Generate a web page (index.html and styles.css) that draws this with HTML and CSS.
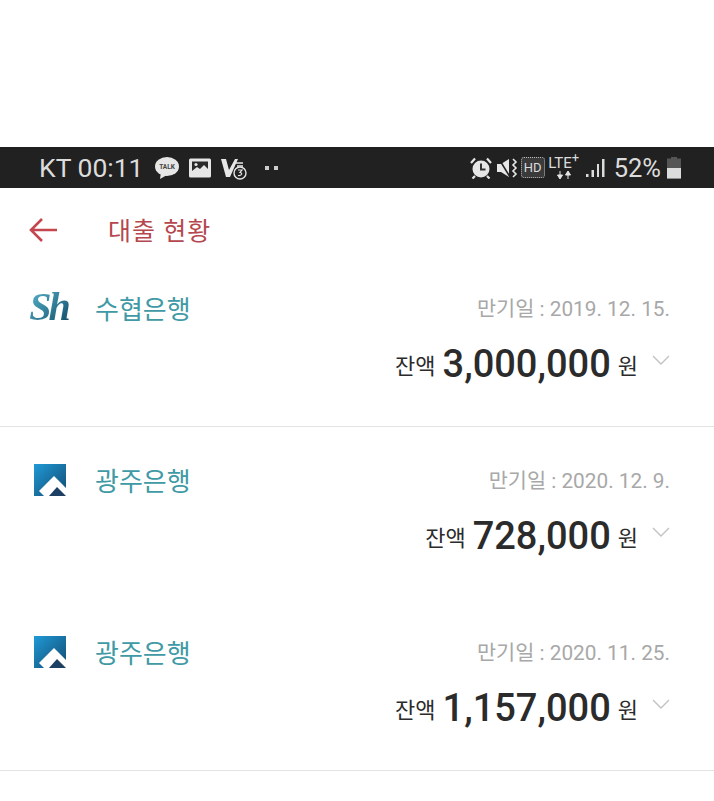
FILE: index.html
```html
<!DOCTYPE html>
<html lang="ko">

<head>
  <meta charset="UTF-8" />
  <meta name="viewport" content="width=device-width, initial-scale=1.0" />
  <title>대출 현황</title>
  <link rel="stylesheet" href="styles.css">
</head>

<body>
  <div class="top-blank"></div>

  <div class="status-bar">
    <div class="status-left">
      <span class="carrier">KT 00:11</span>
      <svg class="ico" width="24" height="24" viewBox="0 0 24 24">
        <ellipse cx="12" cy="10.500" rx="12" ry="9.500" fill="#e6e6e6" />
        <path d="M6 16l-1 7 7-4z" fill="#e6e6e6" />
        <text x="12" y="13" font-size="6.500" font-weight="700" font-family="Roboto, sans-serif" text-anchor="middle" fill="#444">TALK</text>
      </svg>
      <svg class="ico" width="22" height="20" viewBox="0 0 22 20">
        <rect y="0.500" width="22" height="19" rx="1.500" fill="#e6e6e6" />
        <rect x="3" y="3.500" width="16" height="9.500" fill="#2a2a2a" />
        <circle cx="7" cy="6.500" r="1.600" fill="#e6e6e6" />
        <path d="M3 13l5-4 3 2 4-4 4 4v5H3z" fill="#e6e6e6" />
      </svg>
      <svg class="ico" width="26" height="24" viewBox="0 0 26 24">
        <path d="M0 3h5l3 11L14 3h3L9 21H5z" fill="#e6e6e6" />
        <path d="M14 7h8M16 10h6" stroke="#e6e6e6" stroke-width="1.600" />
        <circle cx="19" cy="17" r="6" fill="#222" stroke="#e6e6e6" stroke-width="1.400" />
        <path d="M17 14h4l-2 2.500c2.500 0 2.500 3.500-2 3" fill="none" stroke="#e6e6e6" stroke-width="1.200" />
      </svg>
      <span class="dots"><i></i><i></i></span>
    </div>
    <div class="status-right">
      <svg class="ico" width="22" height="22" viewBox="0 0 22 22">
        <circle cx="11" cy="12" r="8.500" fill="#e6e6e6" />
        <path d="M11 6.500v6h4.500" fill="none" stroke="#333" stroke-width="2" />
        <path d="M1 6l4-4.500M21 6l-4-4.500M5 19l-2.500 2.500M17 19l2.500 2.500" stroke="#e6e6e6" stroke-width="2.200" />
      </svg>
      <svg class="ico mute" width="22" height="22" viewBox="0 0 22 22">
        <path d="M1 7h4l8-5v18l-8-5H1z" fill="#e6e6e6" />
        <path d="M3 2l11 18" stroke="#212121" stroke-width="1.500" />
        <path d="M17 2l3 3-3 3 3 3-3 3 3 3-3 3" fill="none" stroke="#e6e6e6" stroke-width="1.600" />
      </svg>
      <span class="hd">HD</span>
      <span class="lte">
        <span class="lte-text">LTE<sup>+</sup></span>
        <svg class="ico" width="16" height="8" viewBox="0 0 16 8">
          <path d="M4 0v5M1.500 4L4 8l2.500-4zM12 8V3M9.500 4L12 0l2.500 4z" fill="#e6e6e6" stroke="#e6e6e6" />
        </svg>
      </span>
      <svg class="ico signal" width="19" height="20" viewBox="0 0 19 20">
        <path d="M0 16h2.500v3H0zM5.500 12H8v7H5.500zM11 6h2v13h-2zM16 1h2.500v18H16z" fill="#dcdcdc" />
      </svg>
      <span class="battery-pct">52%</span>
      <span class="battery"><i></i></span>
    </div>
  </div>

  <div class="app-header">
    <svg class="back" width="30" height="26" viewBox="0 0 30 26">
      <path d="M29 13H3M14 2L3 13l11 11" fill="none" stroke="#c4474f" stroke-width="2.600" />
    </svg>
    <span class="title">대출 현황</span>
  </div>

  <ul class="loan-list">
    <li class="loan-item line">
      <div class="loan-top">
        <span class="bank-logo"><span class="sh">Sh</span></span>
        <span class="bank-name">수협은행</span>
        <span class="due">만기일 : 2019. 12. 15.</span>
      </div>
      <div class="loan-bottom">
        <span class="unit">잔액</span>
        <span class="amount">3,000,000</span>
        <span class="unit">원</span>
        <svg class="chev" width="18" height="10" viewBox="0 0 18 10">
          <path d="M1 1l8 8 8-8" fill="none" stroke="#c2c2c2" stroke-width="1.400" />
        </svg>
      </div>
    </li>
    <li class="loan-item">
      <div class="loan-top">
        <span class="bank-logo">
          <svg width="32" height="32" viewBox="0 0 32 32">
            <defs>
              <linearGradient id="kj1" x1="0" y1="0" x2="1" y2="1">
                <stop offset="0" stop-color="#1f9ad6" />
                <stop offset="1" stop-color="#134a72" />
              </linearGradient>
            </defs>
            <rect width="32" height="32" fill="url(#kj1)" />
            <path d="M5 27L20 12l12 12v8h-17l-5 0z" fill="#fff" />
            <path d="M15 32l8-9 9 9z" fill="#1d3f63" />
          </svg>
        </span>
        <span class="bank-name">광주은행</span>
        <span class="due">만기일 : 2020. 12. 9.</span>
      </div>
      <div class="loan-bottom">
        <span class="unit">잔액</span>
        <span class="amount">728,000</span>
        <span class="unit">원</span>
        <svg class="chev" width="18" height="10" viewBox="0 0 18 10">
          <path d="M1 1l8 8 8-8" fill="none" stroke="#c2c2c2" stroke-width="1.400" />
        </svg>
      </div>
    </li>
    <li class="loan-item line">
      <div class="loan-top">
        <span class="bank-logo">
          <svg width="32" height="32" viewBox="0 0 32 32">
            <rect width="32" height="32" fill="url(#kj1)" />
            <path d="M5 27L20 12l12 12v8h-17l-5 0z" fill="#fff" />
            <path d="M15 32l8-9 9 9z" fill="#1d3f63" />
          </svg>
        </span>
        <span class="bank-name">광주은행</span>
        <span class="due">만기일 : 2020. 11. 25.</span>
      </div>
      <div class="loan-bottom">
        <span class="unit">잔액</span>
        <span class="amount">1,157,000</span>
        <span class="unit">원</span>
        <svg class="chev" width="18" height="10" viewBox="0 0 18 10">
          <path d="M1 1l8 8 8-8" fill="none" stroke="#c2c2c2" stroke-width="1.400" />
        </svg>
      </div>
    </li>
  </ul>
</body>

</html>
```

FILE: styles.css
```css
* {
  padding: 0;
  margin: 0;
  list-style: none;
  box-sizing: border-box;
}

body {
  background-color: #fff;
  font-family: Roboto, "Noto Sans CJK KR", sans-serif;
  overflow: hidden;
}

.top-blank {
  height: 147px;
}

.status-bar {
  display: flex;
  justify-content: space-between;
  align-items: center;
  height: 41px;
  padding: 0 33px 0 39px;
  color: #dcdcdc;
  background-color: #212121;
}

.status-left,
.status-right {
  display: flex;
  align-items: center;
}

.status-left {
  gap: 10px;
}

.status-right {
  gap: 3px;
}

.ico {
  display: block;
}

.carrier {
  margin-right: 1px;
  font-size: 26.500px;
}

.dots {
  display: flex;
  gap: 5px;
  margin-left: 8px;
}

.dots>i {
  width: 4px;
  height: 4px;
  background-color: #ccc;
}

.mute {
  margin-left: 1px;
}

.hd {
  width: 24px;
  font-size: 13px;
  line-height: 19px;
  text-align: center;
  background-color: #3a3a3a;
  border: 1px dotted #bbb;
  border-radius: 3px;
}

.lte {
  display: flex;
  flex-direction: column;
  align-items: center;
  width: 32px;
}

.lte-text {
  font-size: 15px;
  line-height: 15px;
  white-space: nowrap;
}

.lte-text>sup {
  font-size: 13px;
  line-height: 0;
}

.signal {
  margin-left: 3px;
}

.battery-pct {
  margin-left: 6px;
  font-size: 25.500px;
}

.battery {
  display: flex;
  align-items: flex-end;
  width: 14px;
  height: 22px;
  margin-left: 3px;
  background-color: #555;
  clip-path: polygon(0 2px, 4px 2px, 4px 0, 10px 0, 10px 2px, 100% 2px, 100% 100%, 0 100%);
}

.battery>i {
  width: 100%;
  height: 11px;
  background-color: #dcdcdc;
}

.app-header {
  display: flex;
  align-items: center;
  height: 67px;
  padding: 14px 0 0 28px;
}

.back {
  display: block;
  margin: 2px 50px 0 0;
}

.title {
  font-size: 25px;
  letter-spacing: 1px;
  color: #b5474e;
}

.loan-item {
  height: 172px;
  padding: 35px 44px 0 29px;
}

.loan-item.line {
  border-bottom: 1px solid #e3e3e3;
}

.loan-top {
  display: flex;
  align-items: center;
  height: 34px;
}

.bank-logo {
  display: flex;
  justify-content: center;
  width: 42px;
  margin-right: 24px;
}

.bank-logo>svg {
  display: block;
  margin-top: 2px;
}

.sh {
  padding-right: 3px;
  font-family: "Liberation Serif", serif;
  font-size: 40px;
  font-style: italic;
  font-weight: bold;
  line-height: 34px;
  letter-spacing: -3px;
  color: transparent;
  background: linear-gradient(135deg, #58b4cc, #0f4a66);
  background-clip: text;
}

.bank-name {
  font-size: 26px;
  color: #3f9aa6;
}

.due {
  margin-left: auto;
  font-size: 20.800px;
  color: #a8a8a8;
}

.loan-bottom {
  display: flex;
  justify-content: flex-end;
  align-items: center;
  gap: 7px;
  height: 46px;
  margin-top: 17px;
  color: #2b2b2b;
}

.unit {
  font-size: 22px;
}

.amount {
  font-size: 38px;
  font-weight: 500;
}

.chev {
  display: block;
  margin: -8px 0 0 7px;
}
```
